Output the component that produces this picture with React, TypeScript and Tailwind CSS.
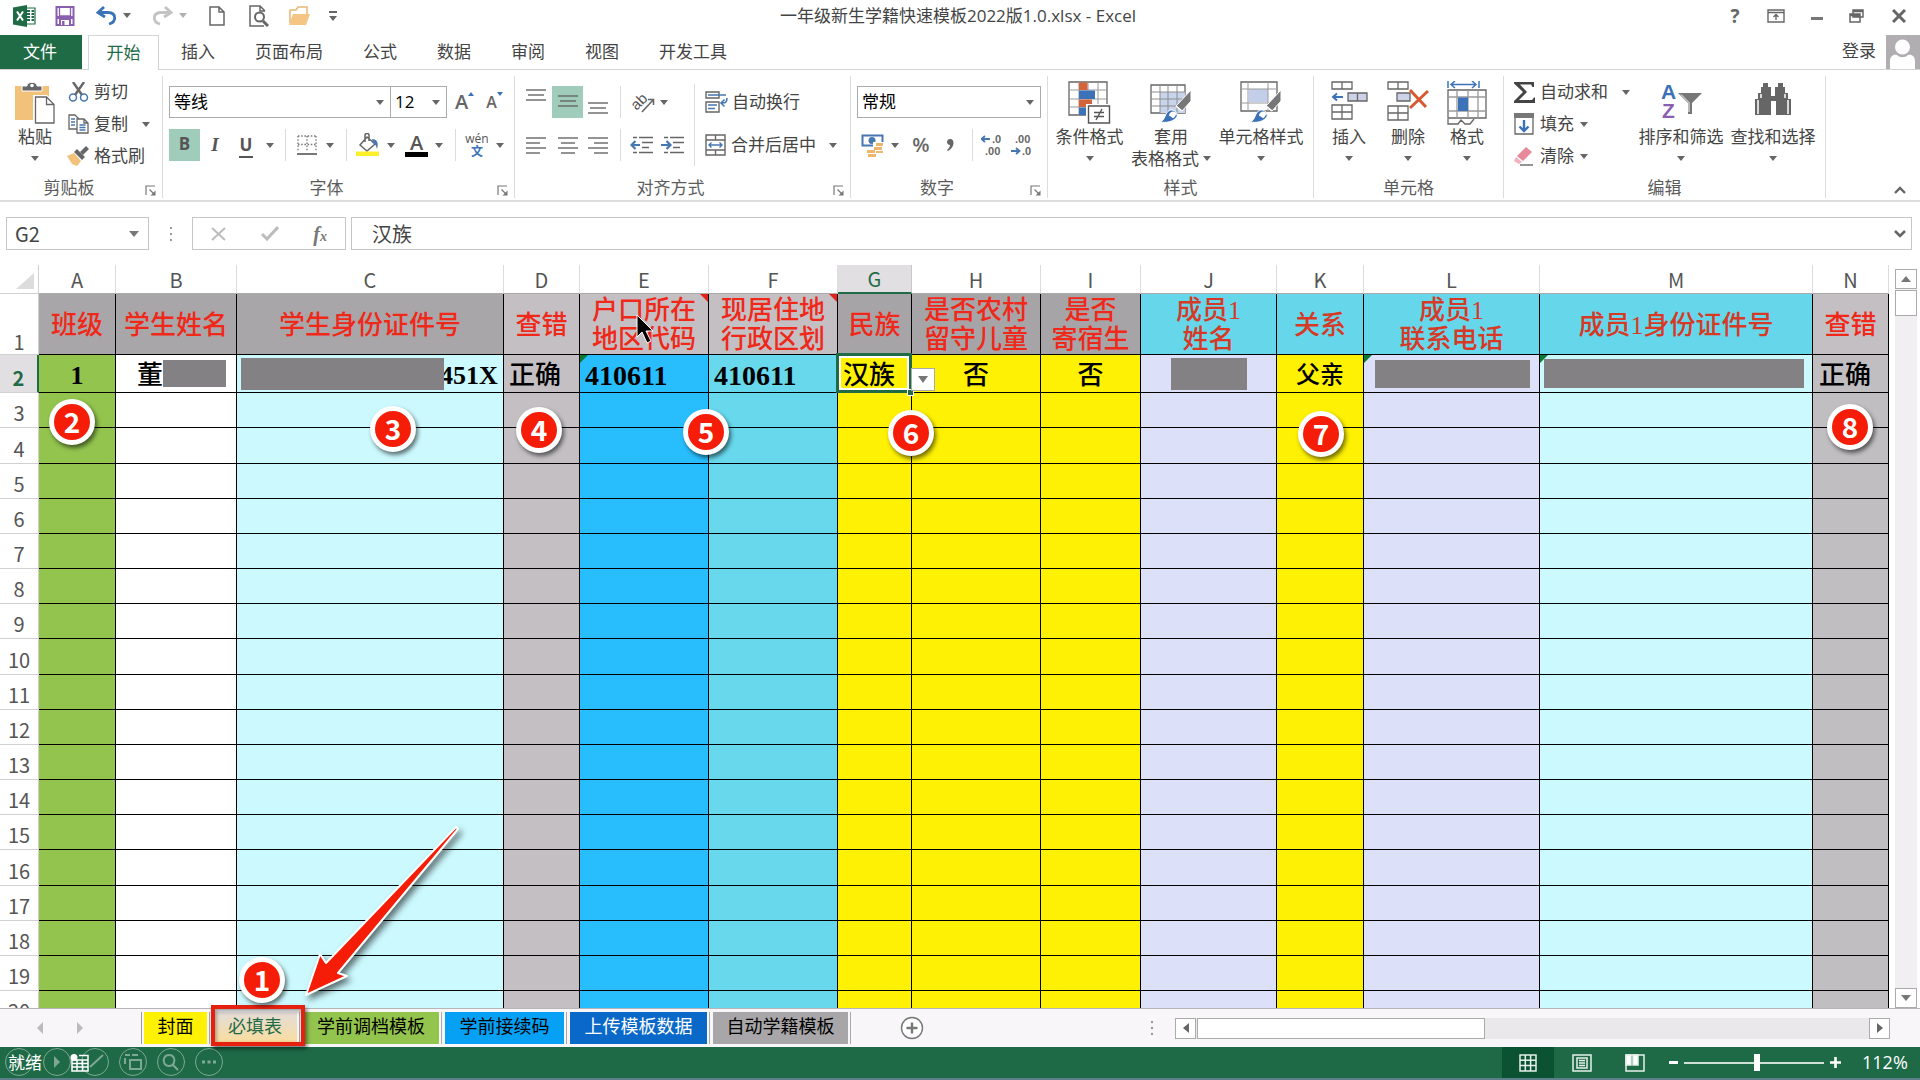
import type { ReactNode } from 'react';

/* ---------- small shared pieces ---------- */

function Caret({ className = '' }: { className?: string }) {
  return (
    <svg viewBox="0 0 8 5" className={`w-2 h-[5px] shrink-0 ${className}`} fill="#666">
      <path d="M0 0h8L4 5z" />
    </svg>
  );
}

function Divider() {
  return <div className="w-px h-8 bg-[#dcdcdc] shrink-0" />;
}

function Select({ label, value, className }: { label: string; value: string; className: string }) {
  return (
    <div className={`relative flex items-center h-8 border border-[#ababab] bg-white ${className}`}>
      <select aria-label={label} className="w-full h-full pl-1 appearance-none bg-transparent text-[17px] text-black outline-none">
        <option>{value}</option>
      </select>
      <Caret className="absolute right-[6px] pointer-events-none" />
    </div>
  );
}

function Group({ title, launcher, className, children }: { title: string; launcher?: boolean; className: string; children: ReactNode }) {
  return (
    <section className={`flex flex-col shrink-0 border-r border-[#dcdcdc] ${className}`}>
      <div className="flex-1 flex">{children}</div>
      <div className="flex items-center h-[20px] text-[#5c5c5c]">
        <span className="flex-1 text-center text-[17px] leading-[20px]">{title}</span>
        {launcher && (
          <button aria-label={`${title}设置`} className="w-6 flex justify-center pt-1">
            <svg viewBox="0 0 11 11" className="w-[11px] h-[11px]" fill="none" stroke="#777" strokeWidth="1.2">
              <path d="M1 10V1h9M4.500 4.500l4 4" />
              <path d="M10.500 5.500v5h-5z" fill="#777" stroke="none" />
            </svg>
          </button>
        )}
      </div>
    </section>
  );
}

function BigButton({ icon, label, second, className }: { icon: ReactNode; label: string; second?: string; className: string }) {
  return (
    <button className={`flex flex-col items-center pt-[5px] shrink-0 whitespace-nowrap text-[17px] leading-[21px] ${className}`}>
      <span className="h-[45px] flex items-start">{icon}</span>
      <span>{label}</span>
      <span className="h-[22px] flex items-center gap-1">
        {second && <span>{second}</span>}
        <Caret />
      </span>
    </button>
  );
}

function SmallButton({ icon, label, caret }: { icon: ReactNode; label: string; caret?: string }) {
  return (
    <button className="h-8 flex items-center whitespace-nowrap">
      <span className="w-6 flex justify-center mr-1">{icon}</span>
      {label}
      {caret && <Caret className={caret} />}
    </button>
  );
}

function Lines({ rows }: { rows: [number, number, number][] }) {
  return (
    <svg viewBox="0 0 20 20" className="w-5 h-5" stroke="#666" strokeWidth="1.400">
      {rows.map(([y, a, b]) => (
        <path key={y} d={`M${a} ${y}H${b}`} />
      ))}
    </svg>
  );
}

/* ---------- icons ---------- */

const ExcelLogo = () => (
  <svg viewBox="0 0 23 22" className="w-[23px] h-[22px]">
    <path d="M11 3h11v16H11z" fill="#fff" stroke="#1f6b45" strokeWidth="1.200" />
    <path d="M14 6h3M14 9h3M14 12h3M14 15h3M18.500 6h2.500M18.500 9h2.500M18.500 12h2.500M18.500 15h2.500" stroke="#1f6b45" strokeWidth="1.800" />
    <path d="M0 2.500L14 0v22L0 19.500z" fill="#1f6b45" />
    <path d="M4 6.500l6 9M10 6.500l-6 9" stroke="#fff" strokeWidth="2" />
  </svg>
);

const SaveIcon = () => (
  <svg viewBox="0 0 20 20" className="w-5 h-5">
    <path d="M1.500 1h17v18h-17z" fill="#fff" stroke="#8a5fb0" strokeWidth="2" />
    <path d="M2 10h16v3H2zM4 12h12v7H4z" fill="#8a5fb0" />
    <path d="M6 14h8v5H6z" fill="#fff" />
    <path d="M7 15h2.500v4H7z" fill="#8a5fb0" />
    <path d="M4.500 1v9h11V1" fill="none" stroke="#8a5fb0" strokeWidth="1.300" />
  </svg>
);

const UndoIcon = ({ color, flip }: { color: string; flip?: boolean }) => (
  <svg viewBox="0 0 21 20" className={`w-[21px] h-5 ${flip ? '-scale-x-100' : ''}`} fill="none" stroke={color} strokeWidth="2.800">
    <path d="M8 1L2 6.500 9 11" />
    <path d="M2.500 6.500H12c9 .5 8.500 9.500 1 11.500" />
  </svg>
);

const PageIcon = () => (
  <svg viewBox="0 0 16 20" className="w-4 h-5" fill="#fff" stroke="#666" strokeWidth="1.500">
    <path d="M1 1h9l5 5v13H1zM10 1v5h5" />
  </svg>
);

const PreviewIcon = () => (
  <svg viewBox="0 0 20 22" className="w-5 h-[22px]" fill="none" stroke="#666" strokeWidth="1.500">
    <path d="M15 21H1V1h10l5 5M11 1v5h5" />
    <circle cx="10.500" cy="12" r="4.500" strokeWidth="2" />
    <path d="M14 16l5 5" strokeWidth="3" />
  </svg>
);

const FolderIcon = () => (
  <svg viewBox="0 0 23 19" className="w-[23px] h-[19px]">
    <path d="M2 17V4h6l2-3h9v7" fill="#fff" stroke="#eab676" strokeWidth="1.500" />
    <path d="M5 8h17l-4 11H1z" fill="#f5c683" />
  </svg>
);

const PasteIcon = () => (
  <svg viewBox="0 0 40 43" className="w-10 h-[43px]">
    <path d="M0 5h34v34H0z" fill="#f3c27a" />
    <path d="M7 10V5h5c0-5 10-5 10 0h5v5z" fill="#666" stroke="#fff" />
    <circle cx="17" cy="4.500" r="1.800" fill="#fff" />
    <path d="M18 14h14l8 8v21H18z" fill="#fff" />
    <path d="M20.500 16h11l7.500 7.500V42H20.500zM31.500 16v7.500H39" fill="#fff" stroke="#666" strokeWidth="1.300" />
  </svg>
);

const CutIcon = () => (
  <svg viewBox="0 0 21 20" className="w-[21px] h-5" fill="none">
    <path d="M5 0l9 13M16 0L7 13" stroke="#666" strokeWidth="2.400" />
    <circle cx="5" cy="15.500" r="3.500" stroke="#4677b0" strokeWidth="1.500" />
    <circle cx="16" cy="15.500" r="3.500" stroke="#4677b0" strokeWidth="1.500" />
  </svg>
);

const CopyIcon = () => (
  <svg viewBox="0 0 21 20" className="w-[21px] h-5" fill="#fff" stroke="#666" strokeWidth="1.300">
    <path d="M1 1h6l4 4v10H1z" />
    <path d="M9 5h7l4 4v10H9zM16 5v4h4" />
    <path d="M3 5h4M3 8h4M3 11h4M11.500 11h6M11.500 13.500h6M11.500 16h6" stroke="#4677b0" />
  </svg>
);

const BrushIcon = () => (
  <svg viewBox="0 0 22 20" className="w-[22px] h-5">
    <path d="M0 10l7-3 7 8-4 5-5-2z" fill="#f3c27a" />
    <path d="M7 6l3-3 8 8-3 3z" fill="#666" />
    <path d="M13 6l6-6 3 3-6 6z" fill="#666" />
  </svg>
);

const BorderIcon = () => (
  <svg viewBox="0 0 20 20" className="w-5 h-5" fill="none" stroke="#777" strokeWidth="1.300">
    <path d="M1 1h18M1 9.500h18M1 1v16M10 1v16M19 1v16" strokeDasharray="1.500 1.700" />
    <path d="M0 19h20" stroke="#555" strokeWidth="1.600" />
  </svg>
);

const FillColorIcon = () => (
  <svg viewBox="0 0 24 24" className="w-6 h-6" fill="none" stroke="#666" strokeWidth="1.500">
    <path d="M11 4l8 7-8 7-7-6zM9 9V2c0-2 4-2 4 0v6" />
    <path d="M16 6c5 0 7 4 5 10-1-4-2-5-4-6z" fill="#4677b0" stroke="none" />
    <path d="M0 18.500h23V23H0z" fill="#fdf02a" stroke="none" />
  </svg>
);

const OrientIcon = () => (
  <svg viewBox="0 0 24 24" className="w-6 h-6 overflow-visible" fill="none" stroke="#666">
    <text x="1" y="18" transform="rotate(-45 7 14)" fontSize="15" fill="#555" stroke="none" fontFamily="Liberation Sans">ab</text>
    <path d="M11 22L22 10M17 9.500h5.500V15" strokeWidth="1.600" />
  </svg>
);

const IndentIcon = ({ out }: { out?: boolean }) => (
  <svg viewBox="0 0 23 18" className="w-[23px] h-[18px]" fill="none" stroke="#666" strokeWidth="1.400">
    <path d="M3 1.500h4M3 16.500h4M9 1.500h14M12 6.500h11M12 11.500h7M9 16.500h14" />
    <path d={out ? 'M10 9H2M5.500 5L1.500 9l4 4' : 'M0 9h9M5.500 5l4 4-4 4'} stroke="#4677b0" strokeWidth="2.200" />
  </svg>
);

const WrapIcon = () => (
  <svg viewBox="0 0 23 22" className="w-[23px] h-[22px]" fill="none" stroke="#666" strokeWidth="1.400">
    <path d="M1 1h13v6H1zM1 11h13v10H1z" />
    <path d="M3 4h18M3 14h9M3 17.500h7M22 7c0 5-2 5-5 5M19.500 8.500L16 12l3.500 3.500" stroke="#4677b0" strokeWidth="1.600" />
  </svg>
);

const MergeIcon = () => (
  <svg viewBox="0 0 21 22" className="w-[21px] h-[22px]" fill="none" stroke="#666" strokeWidth="1.400">
    <path d="M1 1h19v20H1zM1 6h19M1 16h19M10.500 1v5M10.500 16v5" />
    <path d="M4 11h13M6.500 8.500L4 11l2.500 2.500M14.500 8.500L17 11l-2.500 2.500" stroke="#4677b0" />
  </svg>
);

const MoneyIcon = () => (
  <svg viewBox="0 0 23 24" className="w-[23px] h-6">
    <path d="M1.500 2.500h20v10h-20z" fill="#fff" stroke="#4677b0" strokeWidth="2" />
    <circle cx="11" cy="7.500" r="3.500" fill="#4677b0" />
    <path d="M12 9h11v12H12z" fill="#fff" />
    <path d="M15 10h7v3h-7zM13 14h8v3h-8zM15 18h7v2h-7zM6 17h8v3H6zM7 21h8v3H7z" fill="#f0b56c" />
  </svg>
);

const DecimalIcon = ({ less }: { less?: boolean }) => (
  <svg viewBox="0 0 22 26" className="w-[22px] h-[26px]" fontFamily="Liberation Sans" fontSize="11" fontWeight="700">
    <text x={less ? 4 : 11} y="11" fill="#666">{less ? '.00' : '.0'}</text>
    <text x={less ? 11 : 4} y="23" fill="#666">{less ? '.0' : '.00'}</text>
    <path d={less ? 'M0 19h8M5 16l3.500 3L5 22' : 'M9 7H1M4 4L.5 7 4 10'} fill="none" stroke="#4677b0" strokeWidth="1.800" />
  </svg>
);

const ConditionalIcon = () => (
  <svg viewBox="0 0 43 43" className="w-[43px] h-[43px]">
    <path d="M1 1h38v33H1z" fill="#fff" stroke="#666" strokeWidth="1.300" />
    <path d="M1 9h38M1 18h38M1 26h38M11 1v33M20 1v33M30 1v33" stroke="#999" />
    <path d="M11 1.500h8.500V9H11zM11 18.500h13V26H11z" fill="#d3633b" />
    <path d="M11 9.500h16V18H11zM11 26.500h7V34h-7z" fill="#3c73b8" />
    <path d="M18 23h25v20H18z" fill="#fff" />
    <path d="M20.500 25h21v17h-21zM26 31.500h10M26 35.500h10M34 28l-6 11" fill="#fff" stroke="#555" strokeWidth="1.400" />
  </svg>
);

const StyleBrush = () => (
  <>
    <path d="M41 9v11L32 30l-6-5z" fill="#777" stroke="#fff" />
    <path d="M26 25l6 5" stroke="#fff" strokeWidth="1.500" />
    <path d="M10 41c6-2 4-9 10-12 6-1 9 5 6 8-4 4-9 5-16 4z" fill="#3c73b8" stroke="#fff" />
    <path d="M19 35c0-5 6-6 8-2-2 1-2 4-4 4-1 0-2-2-4-2z" fill="#fff" />
  </>
);

const TableStyleIcon = () => (
  <svg viewBox="0 0 42 43" className="w-[42px] h-[43px]">
    <path d="M1 4h34v28H1z" fill="#fff" stroke="#666" strokeWidth="1.300" />
    <path d="M10 11h25v21H10z" fill="#c8d4ec" />
    <path d="M1 11h34M1 18h34M1 25h34M10 4v28M18 4v28M27 4v28" stroke="#8c8c8c" />
    <StyleBrush />
  </svg>
);

const CellStyleIcon = () => (
  <svg viewBox="0 0 42 43" className="w-[42px] h-[43px]">
    <path d="M1 1h36v29H1z" fill="#fff" stroke="#666" strokeWidth="1.300" />
    <path d="M9 8h19v13H9z" fill="#c3cfea" />
    <path d="M1 8h36M1 22h36M8 1v29M28 1v29" stroke="#999" />
    <StyleBrush />
  </svg>
);

const InsertIcon = () => (
  <svg viewBox="0 0 37 41" className="w-[37px] h-[41px]" fill="#fff" stroke="#666" strokeWidth="1.300">
    <path d="M1 1h20v7H1zM11 1v7M1 24h20v14H1zM1 31h20M11 24v14" />
    <path d="M17 12h19v8H17zM26.500 12v8" fill="#ccd3e8" />
    <path d="M12 16H3M6 12.500L2 16l4 3.500" fill="none" stroke="#3c73b8" strokeWidth="2" />
  </svg>
);

const DeleteIcon = () => (
  <svg viewBox="0 0 42 41" className="w-[42px] h-[41px]" fill="#fff" stroke="#666" strokeWidth="1.300">
    <path d="M1 1h20v7H1zM11 1v7M1 25h20v14H1zM1 32h20M11 25v14" />
    <path d="M10 12h13v8H10z" fill="#ccd3e8" />
    <path d="M23 9l16 17M41 10L23 27" fill="none" stroke="#d65a31" strokeWidth="3" />
  </svg>
);

const FormatIcon = () => (
  <svg viewBox="0 0 40 44" className="w-10 h-11" fill="#fff" stroke="#666" strokeWidth="1.300">
    <path d="M1 9h38v28H1z" />
    <path d="M1 16h38M1 30h38M10 9v28M21 9v28M31 9v28" stroke="#999" />
    <path d="M11 16.500h10V30H11z" fill="#3c73b8" stroke="none" />
    <path d="M1 38v5h10l3-4 4 4h5l4-5" />
    <path d="M1 0v7M32 0v7M4 3.500h25M8 0L4 3.500 8 7M25 0l4 3.500L25 7" fill="none" stroke="#3c73b8" strokeWidth="1.500" />
  </svg>
);

const SigmaIcon = () => (
  <svg viewBox="0 0 21 21" className="w-[21px] h-[21px]">
    <path d="M0 0h20v5h-1.500L17 2.500H6l7 7.500-8 8h13l2-2.500h1V21H0v-2l9-9L0 1.500z" fill="#444" />
  </svg>
);

const FillDownIcon = () => (
  <svg viewBox="0 0 20 22" className="w-5 h-[22px]">
    <path d="M1 1h18v20H1z" fill="#fff" stroke="#666" strokeWidth="1.300" />
    <path d="M0 0h20v5H0z" fill="#777" />
    <path d="M10 7v11M5.500 13.500L10 18l4.500-4.500" fill="none" stroke="#3c73b8" strokeWidth="2.400" />
  </svg>
);

const EraserIcon = () => (
  <svg viewBox="0 0 20 19" className="w-5 h-[19px]">
    <path d="M12 0l6 5-9 9-6-5z" fill="#e8899a" />
    <path d="M2 10l6 5-3 2-5-3z" fill="#f3b0bb" />
    <path d="M6 18h13" stroke="#666" strokeWidth="1.400" />
  </svg>
);

const SortIcon = () => (
  <svg viewBox="0 0 41 42" className="w-[41px] h-[42px]" fontFamily="Liberation Sans" fontSize="21" fontWeight="700">
    <text x="0" y="18" fill="#3c73b8">A</text>
    <text x="1" y="37" fill="#8a5fb0">Z</text>
    <path d="M17 12h24L31 22v11h-4V22z" fill="#777" />
    <path d="M20 13.500l8 8V31" fill="none" stroke="#fff" />
  </svg>
);

const FindIcon = () => (
  <svg viewBox="0 0 38 36" className="w-[38px] h-9">
    <path d="M9 2h5v4h3v9h4V6h3V2h5v4h2v6h3v6h3v16H22V20h-5v14H1V18h3v-6h3V6h2z" fill="#666" />
    <path d="M4 19v14M34 19v14M7 13v4M31 13v4" stroke="#fff" strokeWidth="1.500" />
  </svg>
);

/* ---------- ribbon ---------- */

const tabs = ['插入', '页面布局', '公式', '数据', '审阅', '视图', '开发工具'];

function TitleBar() {
  return (
    <header className="relative h-[35px] flex items-center justify-between shrink-0">
      <div className="self-start flex items-center pl-[13px] h-[31px]">
        <ExcelLogo />
        <button aria-label="保存" className="ml-[19px]"><SaveIcon /></button>
        <button aria-label="撤消" className="ml-[21px] flex items-center gap-[6px]"><UndoIcon color="#3c73b8" /><Caret /></button>
        <button aria-label="恢复" className="ml-[21px] flex items-center gap-[6px] opacity-50"><UndoIcon color="#888" flip /><Caret /></button>
        <button aria-label="新建" className="ml-[22px]"><PageIcon /></button>
        <button aria-label="打印预览" className="ml-6"><PreviewIcon /></button>
        <button aria-label="打开" className="ml-[19px]"><FolderIcon /></button>
        <button aria-label="自定义快速访问工具栏" className="ml-[18px] flex flex-col items-center gap-[3px]">
          <span className="w-2 h-[2px] bg-[#666]" />
          <Caret />
        </button>
      </div>
      <h1 className="absolute inset-x-0 top-0 pr-1 text-center text-[17px] leading-8 text-[#444] pointer-events-none">一年级新生学籍快速模板2022版1.0.xlsx - Excel</h1>
      <div className="self-start h-8 flex items-center pr-[14px] gap-6 text-[#666]">
        <button aria-label="帮助" className="text-[19px] font-bold leading-none w-4">?</button>
        <button aria-label="功能区显示选项">
          <svg viewBox="0 0 18 14" className="w-[18px] h-[14px]" fill="none" stroke="#666" strokeWidth="1.400">
            <path d="M1 1h16v12H1zM1 3.500h16M9 11V6M6.500 8L9 5.500 11.500 8" />
          </svg>
        </button>
        <button aria-label="最小化" className="w-4 flex justify-center pt-1"><span className="w-3 h-[3px] bg-[#777]" /></button>
        <button aria-label="还原">
          <svg viewBox="0 0 15 14" className="w-[15px] h-[14px]" fill="#fff" stroke="#666" strokeWidth="1.500">
            <path d="M4 1h10v7H4zM1 5h10v8H1zM1 6.500h10M4 2.500h10" />
          </svg>
        </button>
        <button aria-label="关闭" className="ml-1">
          <svg viewBox="0 0 14 14" className="w-[14px] h-[14px]" stroke="#666" strokeWidth="3">
            <path d="M1 1l12 12M13 1L1 13" />
          </svg>
        </button>
      </div>
    </header>
  );
}

function TabBar() {
  return (
    <nav className="h-[35px] flex items-stretch shrink-0 text-[17px] text-[#444] border-b border-[#d4d4d4]">
      <button className="w-[82px] bg-[#1f6b45] text-white pr-[2px]">文件</button>
      <button className="ml-[6px] w-[71px] bg-white text-[#1f6b45] border border-b-0 border-[#d4d4d4] -mb-px">开始</button>
      <div className="flex ml-[2px]">
        {tabs.map((t) => (
          <button key={t} className="px-[20px]">{t}</button>
        ))}
      </div>
      <div className="ml-auto flex items-center">
        <button className="mr-[10px] pb-[2px]">登录</button>
        <svg viewBox="0 0 34 34" className="w-[34px] h-[34px] bg-[#b0aeb1]" fill="#fff">
          <circle cx="16.500" cy="12" r="7.500" />
          <path d="M4 34V26c0-4 3-7 7-6 3 3 8 3 11 0 4-1 7 2 7 6v8z" />
        </svg>
      </div>
    </nav>
  );
}

function ClipboardGroup() {
  return (
    <Group title="剪贴板" launcher className="w-[163px]">
      <BigButton icon={<PasteIcon />} label="粘贴" className="w-[40px] ml-[15px]" />
      <div className="flex flex-col pl-[11px]">
        <SmallButton icon={<CutIcon />} label="剪切" />
        <SmallButton icon={<CopyIcon />} label="复制" caret="ml-[14px]" />
        <SmallButton icon={<BrushIcon />} label="格式刷" />
      </div>
    </Group>
  );
}

function FontGroup() {
  return (
    <Group title="字体" launcher className="w-[352px]">
      <div className="flex flex-col pl-[6px] pt-[10px] gap-[11px]">
        <div className="flex items-center h-8">
          <Select label="字体" value="等线" className="w-[222px]" />
          <Select label="字号" value="12" className="w-[56px] border-l-0" />
          <button aria-label="增大字号" className="ml-[8px] flex items-start text-[20px] font-semibold text-[#666] leading-8">
            A<svg viewBox="0 0 6 4" className="w-[6px] h-1 mt-[6px]" fill="#3c73b8"><path d="M0 4h6L3 0z" /></svg>
          </button>
          <button aria-label="减小字号" className="ml-3 flex items-start text-[16px] font-semibold text-[#666] leading-8">
            A<svg viewBox="0 0 6 4" className="w-[6px] h-1 mt-[6px]" fill="#3c73b8"><path d="M0 0h6L3 4z" /></svg>
          </button>
        </div>
        <div className="flex items-center h-8 text-[#555]">
          <button className="w-[31px] h-8 bg-[#a0cdbb] text-[17px] font-bold pb-[2px]">B</button>
          <button className="w-[30px] text-[19px] italic font-bold font-['Liberation_Serif',serif]">I</button>
          <button className="w-[32px] text-[17px] font-bold"><span className="border-b-2 border-[#555] px-px">U</span></button>
          <Caret className="ml-1 mr-[11px]" />
          <Divider />
          <button aria-label="边框" className="ml-[11px] mr-[9px]"><BorderIcon /></button>
          <Caret className="mr-3" />
          <Divider />
          <button aria-label="填充颜色" className="ml-[9px] mr-[7px]"><FillColorIcon /></button>
          <Caret className="mr-[10px]" />
          <button className="w-[23px] text-[20px] leading-[18px] font-semibold border-b-[5px] border-black">A</button>
          <Caret className="ml-[7px] mr-[12px]" />
          <Divider />
          <button className="w-[26px] ml-[8px] mr-[6px] text-[12px] leading-[13px]">wén<span className="block leading-[14px] font-bold text-[#3c73b8]">文</span></button>
          <Caret />
        </div>
      </div>
    </Group>
  );
}

function AlignGroup() {
  return (
    <Group title="对齐方式" launcher className="w-[336px]">
      <div className="flex flex-col pt-[10px] gap-[11px]">
        <div className="flex items-center h-8">
          <button aria-label="顶端对齐" className="w-[37px] pl-[11px] self-start pt-[1px]"><Lines rows={[[3, 0, 20], [8, 2, 18], [13, 0, 20]]} /></button>
          <button aria-label="垂直居中" className="w-[31px] h-8 bg-[#a0cdbb] flex justify-center items-center"><Lines rows={[[4, 0, 20], [9, 2, 18], [14, 0, 20]]} /></button>
          <button aria-label="底端对齐" className="w-[37px] pl-[5px] self-end"><Lines rows={[[5, 0, 20], [10, 2, 18], [15, 0, 20]]} /></button>
          <Divider />
          <button aria-label="方向" className="ml-[10px] mr-[5px]"><OrientIcon /></button>
          <Caret />
        </div>
        <div className="flex items-center h-8">
          <button aria-label="左对齐" className="w-[37px] pl-[11px]"><Lines rows={[[3, 0, 20], [8, 0, 14], [13, 0, 20], [18, 0, 14]]} /></button>
          <button aria-label="居中" className="w-[31px] flex justify-center"><Lines rows={[[3, 0, 20], [8, 3, 17], [13, 0, 20], [18, 3, 17]]} /></button>
          <button aria-label="右对齐" className="w-[37px] pl-[5px]"><Lines rows={[[3, 0, 20], [8, 6, 20], [13, 0, 20], [18, 6, 20]]} /></button>
          <Divider />
          <button aria-label="减少缩进量" className="ml-[9px]"><IndentIcon out /></button>
          <button aria-label="增加缩进量" className="ml-[8px]"><IndentIcon /></button>
        </div>
      </div>
      <div className="ml-auto mt-[8px] mb-3 w-[156px] border-l border-[#dcdcdc] pl-[10px] pt-[2px] flex flex-col gap-[11px]">
        <button className="h-8 flex items-center gap-[4px]"><WrapIcon />自动换行</button>
        <button className="h-8 flex items-center gap-[5px] whitespace-nowrap"><MergeIcon />合并后居中<Caret className="ml-[8px]" /></button>
      </div>
    </Group>
  );
}

function NumberGroup() {
  return (
    <Group title="数字" launcher className="w-[197px]">
      <div className="flex flex-col pl-[6px] pt-[10px] gap-[11px]">
        <Select label="数字格式" value="常规" className="w-[184px]" />
        <div className="flex items-center h-8 text-[#666]">
          <button aria-label="会计数字格式" className="ml-[4px] mr-[7px]"><MoneyIcon /></button>
          <Caret />
          <button className="ml-[12px] w-[20px] text-[20px] font-semibold leading-none">%</button>
          <button aria-label="千位分隔样式" className="ml-[16px] mr-[18px]">
            <svg viewBox="0 0 7 12" className="w-[7px] h-3" fill="#666"><path d="M3 0c5 0 5 8-2 12L0 11c2-2 3-3 3-5C-1 6-1 0 3 0z" /></svg>
          </button>
          <Divider />
          <button aria-label="增加小数位数" className="ml-[8px] mr-[8px]"><DecimalIcon /></button>
          <button aria-label="减少小数位数"><DecimalIcon less /></button>
        </div>
      </div>
    </Group>
  );
}

function Ribbon() {
  return (
    <div className="h-[132px] shrink-0 flex pt-[6px] pb-[2px] border-b-2 border-[#dcdcdc] text-[17px] text-[#444]">
      <ClipboardGroup />
      <FontGroup />
      <AlignGroup />
      <NumberGroup />
      <Group title="样式" className="w-[266px]">
        <BigButton icon={<ConditionalIcon />} label="条件格式" className="w-[83px]" />
        <BigButton icon={<TableStyleIcon />} label="套用" second="表格格式" className="w-[80px]" />
        <BigButton icon={<CellStyleIcon />} label="单元格样式" className="w-[100px]" />
      </Group>
      <Group title="单元格" className="w-[190px]">
        <BigButton icon={<InsertIcon />} label="插入" className="w-[60px] ml-[5px]" />
        <BigButton icon={<DeleteIcon />} label="删除" className="w-[58px]" />
        <BigButton icon={<FormatIcon />} label="格式" className="w-[60px]" />
      </Group>
      <Group title="编辑" className="w-[322px]">
        <div className="flex flex-col pl-[8px] w-[131px]">
          <SmallButton icon={<SigmaIcon />} label="自动求和" caret="ml-[14px]" />
          <SmallButton icon={<FillDownIcon />} label="填充" caret="ml-[6px]" />
          <SmallButton icon={<EraserIcon />} label="清除" caret="ml-[6px]" />
        </div>
        <BigButton icon={<SortIcon />} label="排序和筛选" className="w-[92px]" />
        <BigButton icon={<FindIcon />} label="查找和选择" className="w-[92px]" />
      </Group>
      <button aria-label="折叠功能区" className="ml-auto mr-[14px] self-end mb-1">
        <svg viewBox="0 0 12 8" className="w-3 h-2" fill="none" stroke="#666" strokeWidth="2.400"><path d="M1 7l5-5 5 5" /></svg>
      </button>
    </div>
  );
}

function FormulaBar() {
  return (
    <div className="flex items-center shrink-0 pl-[6px] pr-[8px] pt-[15px] pb-[15px] text-[#444]">
      <div className="relative w-[143px] h-[33px] border border-[#c6c6c6] flex items-center">
        <input aria-label="名称框" defaultValue="G2" className="w-full pl-2 text-[20px] font-['Noto_Sans_CJK_SC',sans-serif] outline-none" />
        <svg viewBox="0 0 10 6" className="absolute right-[9px] w-[10px] h-[6px]" fill="#777"><path d="M0 0h10L5 6z" /></svg>
      </div>
      <div className="w-[43px] flex flex-col items-center gap-[4px]">
        <span className="w-[2px] h-[2px] bg-[#999]" />
        <span className="w-[2px] h-[2px] bg-[#999]" />
        <span className="w-[2px] h-[2px] bg-[#999]" />
      </div>
      <div className="w-[154px] h-[33px] border border-[#c6c6c6] flex items-center justify-between pl-[18px] pr-[18px]">
        <button aria-label="取消">
          <svg viewBox="0 0 15 14" className="w-[15px] h-[14px]" stroke="#bcbcbc" strokeWidth="2"><path d="M1 1l13 12M14 1L1 13" /></svg>
        </button>
        <button aria-label="输入">
          <svg viewBox="0 0 18 15" className="w-[18px] h-[15px]" fill="none" stroke="#bcbcbc" strokeWidth="3"><path d="M1 8l5 5L17 1" /></svg>
        </button>
        <button className="text-[20px] leading-none italic font-bold text-[#777] font-['Liberation_Serif',serif]">f<span className="text-[14px]">x</span></button>
      </div>
      <div className="relative ml-[5px] flex-1 h-[33px] border border-[#c6c6c6] flex items-center">
        <input aria-label="编辑栏" defaultValue="汉族" className="w-full pl-[20px] text-[20px] leading-6 font-['Noto_Sans_CJK_SC',sans-serif] outline-none" />
        <svg viewBox="0 0 12 8" className="absolute right-[5px] w-3 h-2" fill="none" stroke="#666" strokeWidth="2.600"><path d="M1 1l5 5 5-5" /></svg>
      </div>
    </div>
  );
}

/* ---------- sheet ---------- */

type Column = { id: string; width: string; title: string[]; head: string; body: string; red?: string; note?: boolean };

const columns: Column[] = [
  { id: 'A', width: 'w-[77px]', title: ['班级'], head: 'bg-[#a8a6a8]', body: 'bg-[#92c44e]' },
  { id: 'B', width: 'w-[121px]', title: ['学生姓名'], head: 'bg-[#a8a6a8]', body: 'bg-white' },
  { id: 'C', width: 'w-[267px]', title: ['学生身份证件号'], head: 'bg-[#a8a6a8]', body: 'bg-[#cbf9fe]' },
  { id: 'D', width: 'w-[76px]', title: ['查错'], head: 'bg-[#c3bfc3]', body: 'bg-[#c3bfc3]' },
  { id: 'E', width: 'w-[129px]', title: ['户口所在', '地区代码'], head: 'bg-[#c3bfc3]', body: 'bg-[#28befe]', note: true },
  { id: 'F', width: 'w-[129px]', title: ['现居住地', '行政区划'], head: 'bg-[#c3bfc3]', body: 'bg-[#68d8ed]', note: true },
  { id: 'G', width: 'w-[74px]', title: ['民族'], head: 'bg-[#a6a4a6]', body: 'bg-[#fef103]' },
  { id: 'H', width: 'w-[129px]', title: ['是否农村', '留守儿童'], head: 'bg-[#a6a4a6]', body: 'bg-[#fef103]' },
  { id: 'I', width: 'w-[100px]', title: ['是否', '寄宿生'], head: 'bg-[#a6a4a6]', body: 'bg-[#fef103]' },
  { id: 'J', width: 'w-[136px]', title: ['成员1', '姓名'], head: 'bg-[#66d7eb]', body: 'bg-[#dde0f9]', red: 'text-[#d63a26]' },
  { id: 'K', width: 'w-[87px]', title: ['关系'], head: 'bg-[#66d7eb]', body: 'bg-[#fef103]', red: 'text-[#d63a26]' },
  { id: 'L', width: 'w-[176px]', title: ['成员1', '联系电话'], head: 'bg-[#66d7eb]', body: 'bg-[#dde0f9]', red: 'text-[#d63a26]' },
  { id: 'M', width: 'w-[273px]', title: ['成员1身份证件号'], head: 'bg-[#66d7eb]', body: 'bg-[#cbf9fe]', red: 'text-[#d63a26]' },
  { id: 'N', width: 'w-[76px]', title: ['查错'], head: 'bg-[#c3bfc3]', body: 'bg-[#c1bec1]' },
];

const emptyRows = Array.from({ length: 18 }, (_, i) => i + 3);

const Mask = ({ className }: { className: string }) => <span className={`bg-[#838183] shrink-0 ${className}`} />;

const ErrorMark = () => (
  <svg viewBox="0 0 8 8" className="absolute left-0 top-0 w-2 h-2" fill="#0b7a32"><path d="M0 0h8L0 8z" /></svg>
);

const firstRow: Record<string, ReactNode> = {
  A: <div className="text-center pt-[3px] font-bold">1</div>,
  B: <div className="flex items-center pl-[21px]"><span className="pt-[3px]">董</span><Mask className="w-[63px] h-[27px]" /></div>,
  C: <div className="flex items-center pl-[4px] overflow-hidden"><Mask className="w-[203px] h-8 relative z-10" /><span className="-ml-1 pt-[3px] font-bold">451X</span></div>,
  D: <div className="pl-[5px] pt-[3px]">正确</div>,
  E: <><ErrorMark /><div className="pl-[5px] pt-[3px] font-bold text-[28px]">410611</div></>,
  F: <div className="pl-[5px] pt-[3px] font-bold text-[28px]">410611</div>,
  G: (
    <>
      <div className="pl-[5px] pt-[3px]">汉族</div>
      <div className="absolute -inset-px -top-[2px] -left-[2px] border-[3px] border-[#1f6b45] z-10 pointer-events-none">
        <div className="h-full border-2 border-white" />
      </div>
      <span className="absolute -right-[3px] -bottom-[4px] w-[7px] h-[7px] bg-[#1f6b45] border border-white z-10" />
      <button aria-label="选择民族" className="absolute left-full top-[13px] z-10 w-[24px] h-[23px] bg-white border border-[#ababab] flex items-center justify-center">
        <svg viewBox="0 0 10 7" className="w-[10px] h-[7px]" fill="#777"><path d="M0 0h10L5 7z" /></svg>
      </button>
    </>
  ),
  H: <div className="text-center pt-[3px]">否</div>,
  I: <div className="text-center pt-[3px]">否</div>,
  J: <div className="flex justify-center"><Mask className="w-[76px] h-8" /></div>,
  K: <div className="text-center pt-[3px] text-[24px]">父亲</div>,
  L: <><ErrorMark /><div className="flex pl-[11px]"><Mask className="w-[155px] h-[28px]" /></div></>,
  M: <><ErrorMark /><div className="flex pl-[4px]"><Mask className="w-[260px] h-[29px]" /></div></>,
  N: <div className="pl-[6px] pt-[3px]">正确</div>,
};

function Sheet() {
  return (
    <div className="flex-1 min-h-0 flex overflow-hidden border-b border-[#b5b5b5] bg-white">
      <div className="flex-1 overflow-hidden">
        <table className="w-[1889px] table-fixed border-separate border-spacing-0 whitespace-nowrap font-['Liberation_Serif','Noto_Sans_CJK_SC',serif]">
          <thead>
            <tr className="h-[29px] font-['Noto_Sans_CJK_SC',sans-serif] text-[20px] leading-[27px] text-[#555]">
              <th className="w-[39px] p-0 border-r border-b border-[#d0d0d0]">
                <svg viewBox="0 0 18 16" className="w-[18px] h-4 ml-auto mr-1 mt-1" fill="#dcdcdc"><path d="M18 0v16H0z" /></svg>
              </th>
              {columns.map((c) => (
                <th
                  key={c.id}
                  className={`${c.width} p-0 border-r font-normal ${c.id === 'G' ? 'bg-[#e1dfe2] text-[#1f6b45] border-b-2 border-b-[#1f6b45] border-r-[#c8c8c8]' : 'border-b border-b-[#aaa] border-r-[#dcdcdc]'}`}
                >
                  {c.id}
                </th>
              ))}
            </tr>
          </thead>
          <tbody className="text-[26px] leading-[29px]">
            <tr className="h-[61px]">
              <th className="p-0 align-bottom border-r border-b border-[#d0d0d0] font-['Noto_Sans_CJK_SC',sans-serif] text-[20px] leading-6 font-normal text-[#555]">1</th>
              {columns.map((c) => (
                <td key={c.id} className={`relative p-0 pt-[2px] text-center font-medium border-r border-b border-black ${c.head} ${c.red ?? 'text-[#f0281a]'}`}>
                  {c.title.map((line) => <div key={line}>{line}</div>)}
                  {c.note && <svg viewBox="0 0 8 8" className="absolute right-0 top-0 w-2 h-2" fill="#e0231b"><path d="M0 0h8v8z" /></svg>}
                </td>
              ))}
            </tr>
            <tr className="h-[38px]">
              <th className="p-0 align-bottom bg-[#e1dfe2] border-r-2 border-b border-b-[#d0d0d0] border-r-[#1f6b45] font-['Noto_Sans_CJK_SC',sans-serif] text-[20px] leading-7 font-bold text-[#1f6b45]">2</th>
              {columns.map((c) => (
                <td key={c.id} className={`relative p-0 font-medium text-black border-r border-b border-black ${c.body}`}>{firstRow[c.id]}</td>
              ))}
            </tr>
            {emptyRows.map((r) => (
              <tr key={r} className={r % 6 === 4 ? 'h-[36px]' : 'h-[35px]'}>
                <th className="p-0 align-bottom border-r border-b border-[#d0d0d0] font-['Noto_Sans_CJK_SC',sans-serif] text-[20px] leading-7 font-normal text-[#555]">{r}</th>
                {columns.map((c) => (
                  <td key={c.id} className={`p-0 border-r border-b border-black ${c.body}`} />
                ))}
              </tr>
            ))}
          </tbody>
        </table>
      </div>
      <div className="w-[22px] mr-[3px] mt-[4px] flex flex-col bg-[#f1eff1]">
        <button aria-label="向上滚动" className="h-[20px] border border-[#ababab] bg-white flex items-center justify-center">
          <svg viewBox="0 0 10 6" className="w-[10px] h-[6px]" fill="#777"><path d="M0 6h10L5 0z" /></svg>
        </button>
        <div className="h-[26px] mt-px border border-[#ababab] bg-white" />
        <button aria-label="向下滚动" className="mt-auto h-[20px] border border-[#ababab] bg-white flex items-center justify-center">
          <svg viewBox="0 0 10 6" className="w-[10px] h-[6px]" fill="#777"><path d="M0 0h10L5 6z" /></svg>
        </button>
      </div>
    </div>
  );
}

const sheetTabs = [
  { name: '封面', style: 'w-[63px] bg-[#fef103] text-black' },
  { name: '必填表', style: 'w-[84px] bg-gradient-to-b from-[#e3dcd8] to-[#fbdc9a] text-[#1f6b45]' },
  { name: '学前调档模板', style: 'w-[136px] bg-[#92c44e] text-black' },
  { name: '学前接续码', style: 'w-[119px] bg-[#06a0f5] text-black' },
  { name: '上传模板数据', style: 'w-[137px] bg-[#0a68c8] text-white' },
  { name: '自动学籍模板', style: 'w-[135px] bg-[#a8a6a8] text-black' },
];

function SheetTabs() {
  return (
    <div className="h-[38px] shrink-0 flex items-center bg-[#f8f6f8] text-[18px]">
      <div className="w-[141px] flex justify-center gap-[34px] pr-[22px]">
        <button aria-label="上一个工作表"><svg viewBox="0 0 6 12" className="w-[6px] h-3" fill="#bbb"><path d="M6 0v12L0 6z" /></svg></button>
        <button aria-label="下一个工作表"><svg viewBox="0 0 6 12" className="w-[6px] h-3" fill="#bbb"><path d="M0 0v12l6-6z" /></svg></button>
      </div>
      <div className="flex h-[32px] border-l border-[#999] pl-[2px]">
        {sheetTabs.map((t) => (
          <div key={t.name} className="flex border-r border-[#aaa] pr-[2px] mr-[3px]">
            <button className={`${t.style} leading-[28px] pb-1 whitespace-nowrap`}>{t.name}</button>
          </div>
        ))}
      </div>
      <button aria-label="新工作表" className="ml-[46px]">
        <svg viewBox="0 0 24 24" className="w-6 h-6" fill="#fff" stroke="#777" strokeWidth="1.400">
          <circle cx="12" cy="12" r="10.500" />
          <path d="M12 6.500v11M6.500 12h11" strokeWidth="2.400" />
        </svg>
      </button>
      <div className="ml-auto flex items-center mr-[30px]">
        <div className="flex flex-col gap-[4px] mr-[22px]">
          <span className="w-[2px] h-[2px] bg-[#999]" />
          <span className="w-[2px] h-[2px] bg-[#999]" />
          <span className="w-[2px] h-[2px] bg-[#999]" />
        </div>
        <div className="w-[715px] h-[21px] flex bg-[#eae8ea]">
          <button aria-label="向左滚动" className="w-[21px] bg-white border border-[#ababab] flex items-center justify-center">
            <svg viewBox="0 0 6 10" className="w-[6px] h-[10px]" fill="#666"><path d="M6 0v10L0 5z" /></svg>
          </button>
          <div className="w-[288px] ml-px bg-white border border-[#ababab]" />
          <button aria-label="向右滚动" className="w-[21px] ml-auto bg-white border border-[#ababab] flex items-center justify-center">
            <svg viewBox="0 0 6 10" className="w-[6px] h-[10px]" fill="#666"><path d="M0 0v10l6-5z" /></svg>
          </button>
        </div>
      </div>
    </div>
  );
}

/* faint presenter buttons that float over the left end of the status bar */
const presenterIcons = [
  <path key="p" d="M17 10l-6 5 6 5z" fill="#7fa893" stroke="none" />,
  <path key="n" d="M12 9l6 6-6 6z" fill="#7fa893" stroke="none" />,
  <path key="d" d="M10 20l13-12" strokeWidth="2" />,
  <path key="s" d="M7 8h5M14 8h6M7 11v6M12 13h11v9H12z" strokeWidth="2" />,
  <path key="z" d="M13 8a5.500 5.500 0 1 0 .1 0M17 18l5 5" strokeWidth="2" />,
  <path key="m" d="M8 15h3M13.500 15h3M19 15h3" strokeWidth="3" />,
];

function StatusBar() {
  return (
    <footer className="relative h-[33px] shrink-0 flex items-center bg-[#1e6a46] border-b-2 border-[#5d7f8b] text-white">
      <div className="absolute left-[4px] top-0 flex gap-2">
        {presenterIcons.map((icon, i) => (
          <svg key={i} viewBox="0 0 30 30" className="w-[30px] h-[30px]" fill="none" stroke="#7fa893">
            <circle cx="15" cy="15" r="13.500" strokeWidth="1" />
            {icon}
          </svg>
        ))}
      </div>
      <span className="relative pl-[8px] text-[17px]">就绪</span>
      <svg viewBox="0 0 19 18" className="relative ml-[28px] w-[19px] h-[18px]" fill="none" stroke="#fff" strokeWidth="1.500">
        <path d="M2 6h16v11H2zM2 9.500h16M2 13h16M7 6v11M12.500 6v11M9 1.500h9V6" />
        <circle cx="4" cy="3.500" r="3.500" fill="#fff" stroke="none" />
      </svg>
      <div className="ml-auto h-full flex items-center">
        <button aria-label="普通" className="w-[52px] h-full bg-[#0b5233] flex items-center justify-center">
          <svg viewBox="0 0 18 18" className="w-[18px] h-[18px]" fill="none" stroke="#e6f0ea" strokeWidth="1.500"><path d="M1 1h16v16H1zM1 6.300h16M1 11.600h16M6.300 1v16M11.600 1v16" /></svg>
        </button>
        <button aria-label="页面布局" className="ml-[18px]">
          <svg viewBox="0 0 20 18" className="w-5 h-[18px]" fill="none" stroke="#e6f0ea" strokeWidth="1.500"><path d="M1 1h18v16H1zM5 4h10v10H5zM7 6.500h6M7 9h6M7 11.500h6" /></svg>
        </button>
        <button aria-label="分页预览" className="ml-[33px]">
          <svg viewBox="0 0 20 18" className="w-5 h-[18px]" fill="none" stroke="#e6f0ea" strokeWidth="1.500"><path d="M1 1h18v16H1z" /><path d="M1 1h5v10H1zM8 1h5v10H8z" fill="#fff" /></svg>
        </button>
        <button aria-label="缩小" className="ml-[24px] w-[9px] h-[3px] bg-white" />
        <input
          type="range"
          aria-label="显示比例"
          defaultValue={52}
          className="ml-[6px] mr-[6px] w-[140px] h-5 appearance-none bg-transparent bg-[linear-gradient(#cfe0d7,#cfe0d7)] bg-[length:100%_2px] bg-center bg-no-repeat [&::-webkit-slider-thumb]:appearance-none [&::-webkit-slider-thumb]:w-[6px] [&::-webkit-slider-thumb]:h-[17px] [&::-webkit-slider-thumb]:bg-white"
        />
        <button aria-label="放大">
          <svg viewBox="0 0 11 11" className="w-[11px] h-[11px]" stroke="#fff" strokeWidth="2.600"><path d="M5.500 0v11M0 5.500h11" /></svg>
        </button>
        <span className="ml-[21px] w-[58px] text-[18px]">112%</span>
      </div>
    </footer>
  );
}

/* ---------- annotations drawn over the window ---------- */

const badges = [
  { n: 1, pos: 'left-[239px] top-[957px]' },
  { n: 2, pos: 'left-[49px] top-[399px]' },
  { n: 3, pos: 'left-[370px] top-[406px]' },
  { n: 4, pos: 'left-[516px] top-[407px]' },
  { n: 5, pos: 'left-[683px] top-[409px]' },
  { n: 6, pos: 'left-[888px] top-[410px]' },
  { n: 7, pos: 'left-[1298px] top-[411px]' },
  { n: 8, pos: 'left-[1827px] top-[404px]' },
];

function Annotations() {
  return (
    <div className="absolute inset-0 z-20 overflow-hidden pointer-events-none">
      <div className="absolute left-[211px] top-[1005px] w-[94px] h-[41px] border-4 border-[#e6200f] shadow-[2px_3px_4px_rgba(0,0,0,0.5),inset_1px_2px_4px_rgba(0,0,0,0.4)]" />
      <svg viewBox="0 0 180 196" className="absolute left-[296px] top-[816px] w-[180px] h-[196px] drop-shadow-[3px_4px_3px_rgba(0,0,0,0.55)]">
        <path d="M10 179L24 138l6 9L160 11l2 2L42 157l9 3z" fill="#f51d07" stroke="#fff" strokeWidth="2" strokeLinejoin="round" />
      </svg>
      {badges.map((b) => (
        <div
          key={b.n}
          className={`absolute ${b.pos} w-[46px] h-[46px] pb-[2px] rounded-full border-[5px] border-white bg-[#f51d07] shadow-[2px_3px_4px_rgba(0,0,0,0.55)] flex items-center justify-center text-[28px] leading-none font-bold text-white font-['Noto_Sans_CJK_SC',sans-serif]`}
        >
          {b.n}
        </div>
      ))}
      <svg viewBox="0 0 18 30" className="absolute left-[636px] top-[314px] w-[18px] h-[30px]" fill="#000" stroke="#fff">
        <path d="M1 1v22l5-5 5 11 4-2-5-10h7z" />
      </svg>
    </div>
  );
}

export default function App() {
  return (
    <div className="relative h-screen flex flex-col overflow-hidden bg-white font-['Open_Sans','Noto_Sans_CJK_SC',sans-serif]">
      <TitleBar />
      <TabBar />
      <Ribbon />
      <FormulaBar />
      <Sheet />
      <SheetTabs />
      <StatusBar />
      <Annotations />
    </div>
  );
}
